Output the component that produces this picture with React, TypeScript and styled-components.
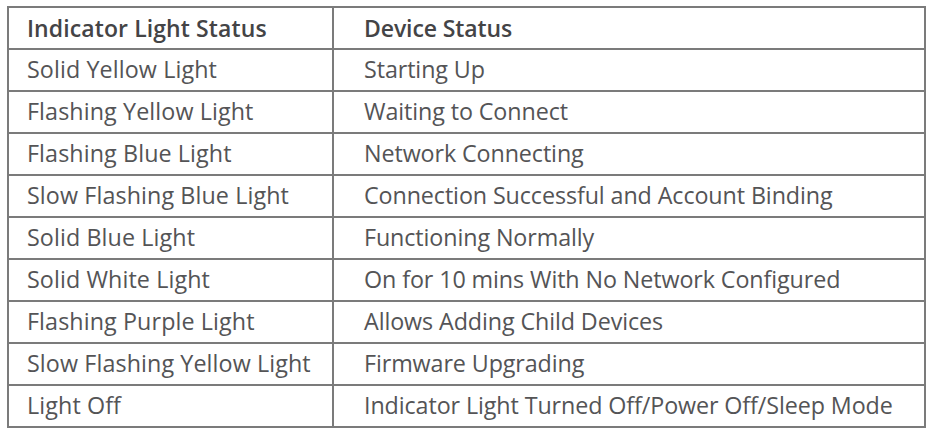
import React from "react";
import styled, { createGlobalStyle } from "styled-components";

const Global = createGlobalStyle`
  html, body { margin: 0; padding: 0; background: #fff; }
  body { font-family: "Open Sans", "Noto Sans", sans-serif; }
`;

const Page = styled.div`
  padding: 6px 0 0 7px;
`;

const Table = styled.table`
  border-collapse: collapse;
  width: 919px;
  table-layout: fixed;
`;

const Row = styled.tr`
  height: 42px;
`;

const Cell = styled.td<{ $first?: boolean; $head?: boolean }>`
  box-sizing: border-box;
  border: 2px solid #7b7b7b;
  padding: 0 0 0 ${(p) => (p.$first ? "18px" : "30px")};
  width: ${(p) => (p.$first ? "325px" : "auto")};
  font-size: ${(p) => (p.$head ? "23px" : "23.3px")};
  font-weight: ${(p) => (p.$head ? 600 : 400)};
  color: ${(p) => (p.$head ? "#444446" : "#545456")};
  vertical-align: middle;
  white-space: nowrap;
  line-height: 1;
  letter-spacing: ${(p) => (p.$first ? "0.1px" : "-0.1px")};
`;

const rows: [string, string][] = [
  ["Solid Yellow Light", "Starting Up"],
  ["Flashing Yellow Light", "Waiting to Connect"],
  ["Flashing Blue Light", "Network Connecting"],
  ["Slow Flashing Blue Light", "Connection Successful and Account Binding"],
  ["Solid Blue Light", "Functioning Normally"],
  ["Solid White Light", "On for 10 mins With No Network Configured"],
  ["Flashing Purple Light", "Allows Adding Child Devices"],
  ["Slow Flashing Yellow Light", "Firmware Upgrading"],
  ["Light Off", "Indicator Light Turned Off/Power Off/Sleep Mode"],
];

export default function App() {
  return (
    <Page>
      <Global />
      <Table>
        <tbody>
          <Row>
            <Cell $first $head>Indicator Light Status</Cell>
            <Cell $head>Device Status</Cell>
          </Row>
          {rows.map(([a, b]) => (
            <Row key={a}>
              <Cell $first>{a}</Cell>
              <Cell>{b}</Cell>
            </Row>
          ))}
        </tbody>
      </Table>
    </Page>
  );
}
